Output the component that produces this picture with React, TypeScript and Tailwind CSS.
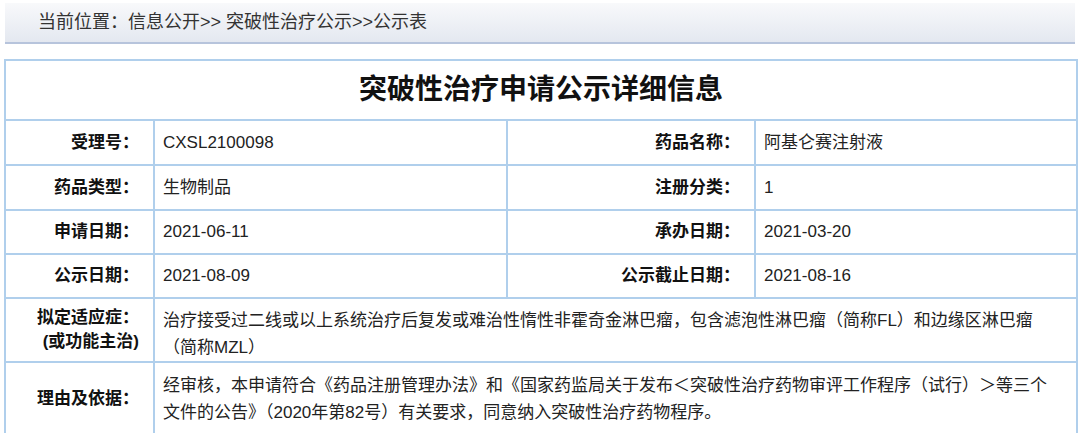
export default function App() {
  const font = { fontFamily: '"Liberation Sans","Noto Sans CJK SC",sans-serif' };
  const L = "border-2 border-[#b0cfec] text-right font-bold pr-[14px] text-[17px] text-[#111]";
  const V = "border-2 border-[#b0cfec] pl-[8px] text-[17px] text-[#222]";
  return (
    <div className="w-[1080px] h-[433px] bg-white overflow-hidden" style={font}>
      <div className="pt-[3px] px-[5px]">
        <div className="h-[41px] flex items-center pl-[33px] text-[18px] text-[#333] bg-gradient-to-b from-[#f8f9fb] to-[#e4e8f0] border-b-2 border-[#b7c4dc]">
          当前位置：信息公开&gt;&gt; 突破性治疗公示&gt;&gt;公示表
        </div>
      </div>
      <table className="mt-[15px] ml-[4px] w-[1072px] border-collapse table-fixed">
        <colgroup>
          <col className="w-[149px]" />
          <col className="w-[353px]" />
          <col className="w-[248px]" />
          <col className="w-[322px]" />
        </colgroup>
        <tbody>
          <tr className="h-[60px]">
            <td colSpan={4} className="border-2 border-[#b0cfec] text-center text-[28px] font-bold text-[#111]">突破性治疗申请公示详细信息</td>
          </tr>
          <tr className="h-[45px]">
            <td className={L}>受理号：</td><td className={V}>CXSL2100098</td>
            <td className={L}>药品名称：</td><td className={V}>阿基仑赛注射液</td>
          </tr>
          <tr className="h-[45px]">
            <td className={L}>药品类型：</td><td className={V}>生物制品</td>
            <td className={L}>注册分类：</td><td className={V}>1</td>
          </tr>
          <tr className="h-[44px]">
            <td className={L}>申请日期：</td><td className={V}>2021-06-11</td>
            <td className={L}>承办日期：</td><td className={V}>2021-03-20</td>
          </tr>
          <tr className="h-[44px]">
            <td className={L}>公示日期：</td><td className={V}>2021-08-09</td>
            <td className={L}>公示截止日期：</td><td className={V}>2021-08-16</td>
          </tr>
          <tr className="h-[62px]">
            <td className={L + " leading-[24px]"}>拟定适应症：<br />(或功能主治)</td>
            <td colSpan={3} className={V + " leading-[27px] align-top pt-[8px]"}>治疗接受过二线或以上系统治疗后复发或难治性惰性非霍奇金淋巴瘤，包含滤泡性淋巴瘤（简称FL）和边缘区淋巴瘤<br />（简称MZL）</td>
          </tr>
          <tr className="h-[73px]">
            <td className={L}>理由及依据：</td>
            <td colSpan={3} className={V + " leading-[27px] whitespace-nowrap"}>经审核，本申请符合《药品注册管理办法》和《国家药监局关于发布＜突破性治疗药物审评工作程序（试行）＞等三个<br />文件的公告》（2020年第82号）有关要求，同意纳入突破性治疗药物程序。</td>
          </tr>
        </tbody>
      </table>
    </div>
  );
}
